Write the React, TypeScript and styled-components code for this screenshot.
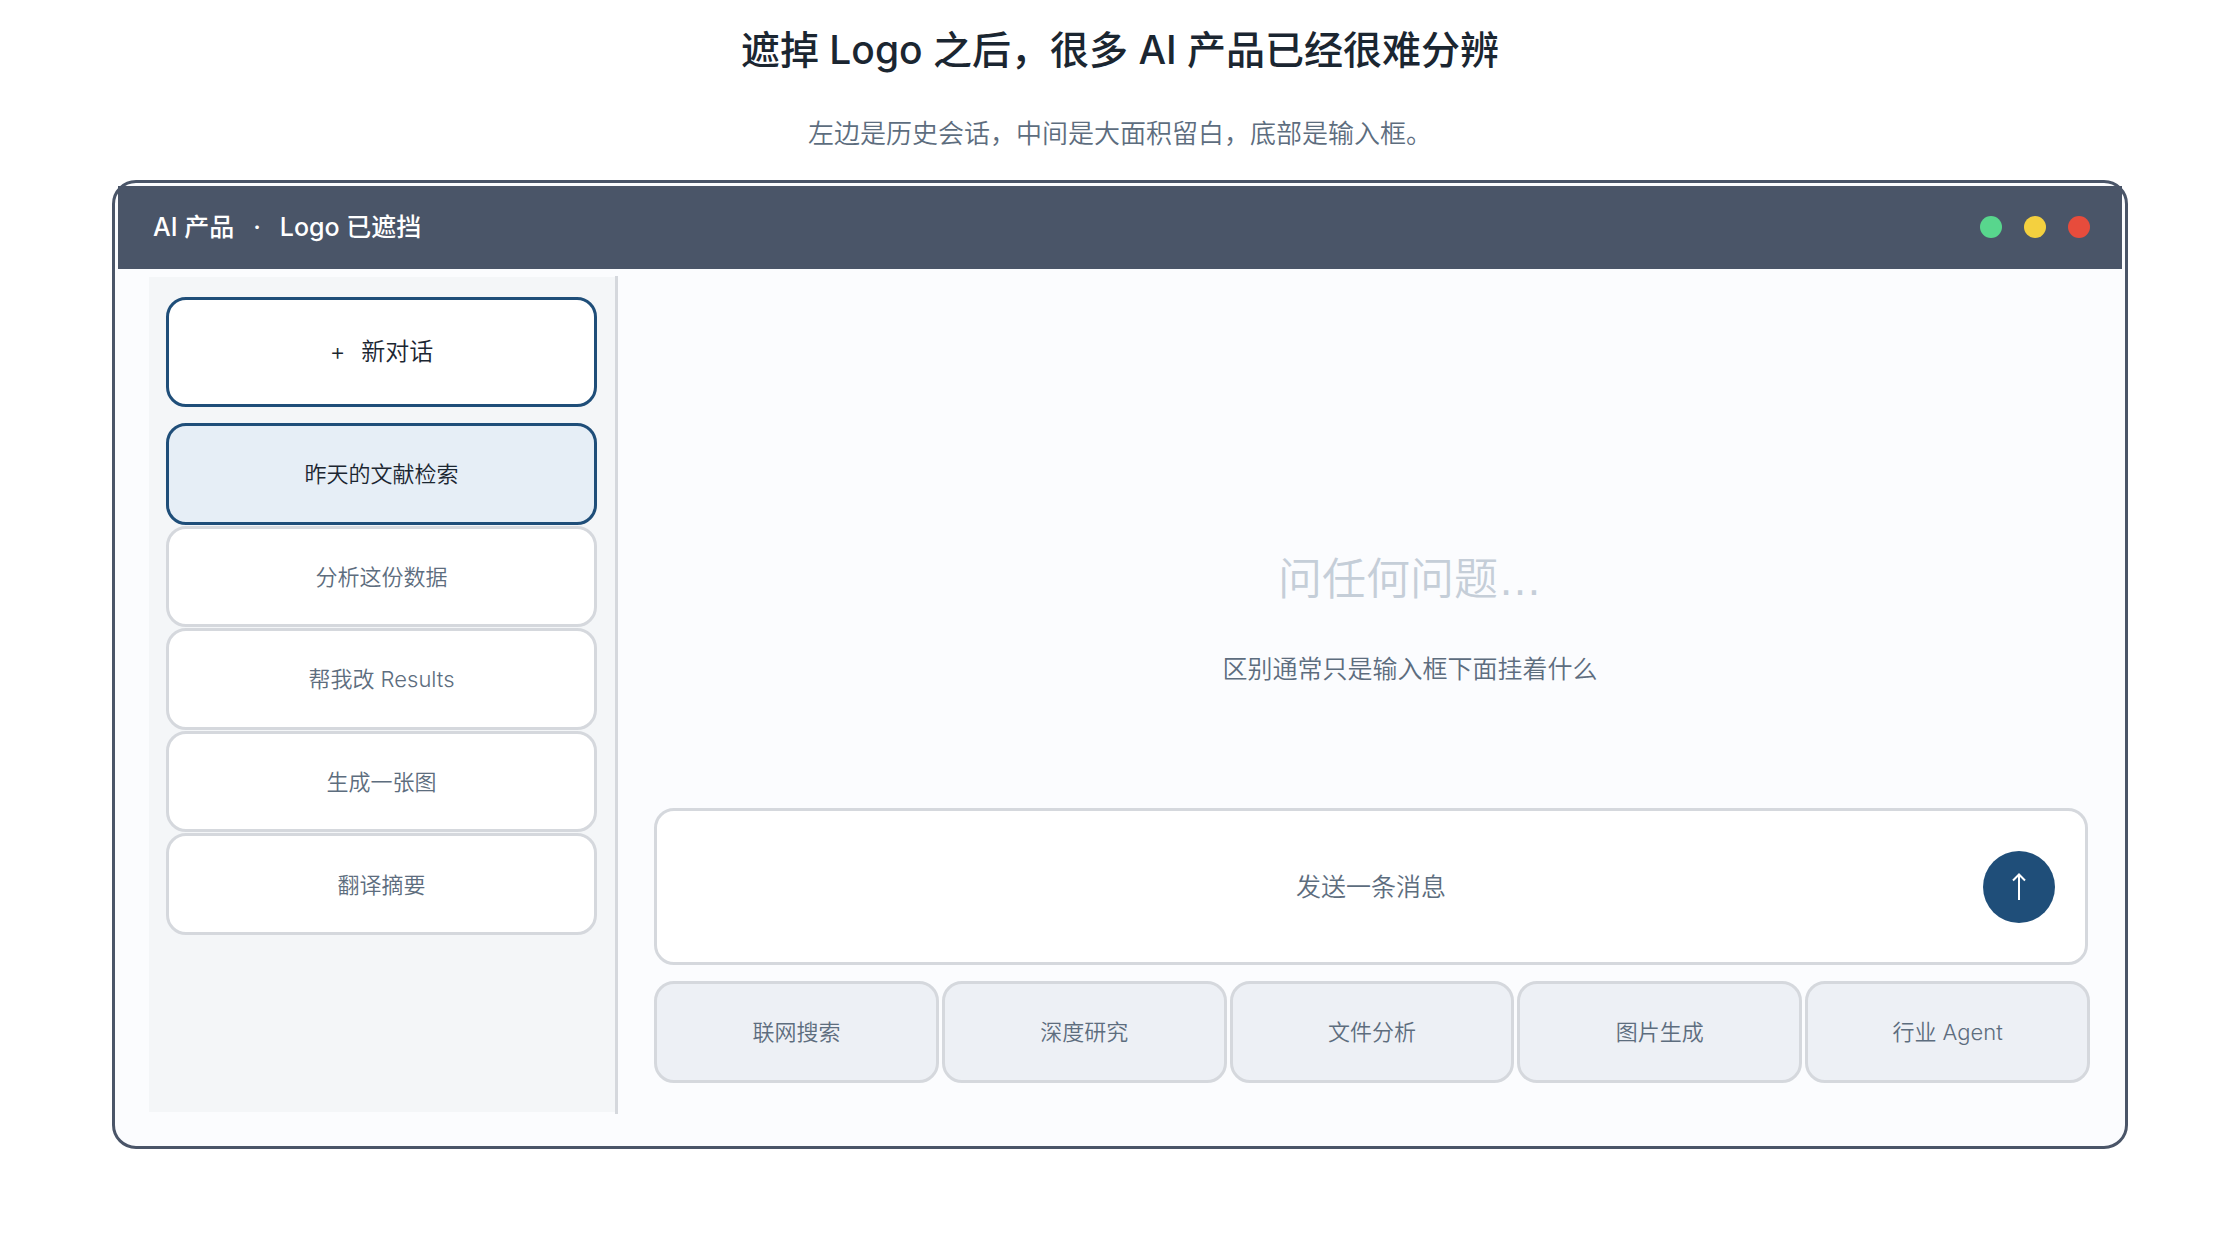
import React from "react";
import styled, { createGlobalStyle } from "styled-components";

const color = {
  ink: "#1b2631",
  slate: "#5d6d7e",
  frame: "#4a5568",
  navy: "#1f4e79",
  line: "#d5d8dd",
  ghost: "#c5ced8",
};

const GlobalStyle = createGlobalStyle`
  *, *::before, *::after { box-sizing: border-box; }
  body {
    margin: 0;
    background: #fff;
    color: ${color.ink};
    font-family: Inter, "Noto Sans CJK SC", sans-serif;
    font-weight: 350;
  }
  button, input { font: inherit; color: inherit; margin: 0; }
`;

const Page = styled.div`
  padding: 20px 112px 0;
`;

const Title = styled.h1`
  margin: 0;
  text-align: center;
  font-size: 39px;
  line-height: 60px;
  font-weight: 500;
`;

const Subtitle = styled.p`
  margin: 34px 0 26px;
  text-align: center;
  font-size: 26px;
  line-height: 40px;
  color: ${color.slate};
`;

const Window = styled.section`
  border: 3px solid ${color.frame};
  border-radius: 24px;
  background: #fbfcfe;
  padding: 3px 3px 32px;
`;

const TitleBar = styled.header`
  display: flex;
  align-items: center;
  justify-content: space-between;
  height: 83px;
  padding: 0 32px 1px 35px;
  background: ${color.frame};
  color: #fff;
`;

const Brand = styled.div`
  display: flex;
  gap: 19px;
  font-size: 25px;
  line-height: 36px;
  font-weight: 500;
`;

const Lights = styled.div`
  display: flex;
  gap: 22px;
`;

const Light = styled.span<{ $tone: string }>`
  width: 22px;
  height: 22px;
  border-radius: 50%;
  background: ${(p) => p.$tone};
`;

const Body = styled.div`
  display: grid;
  grid-template-columns: 469px 1fr;
  gap: 36px;
  padding: 7px 32px 0 31px;
`;

const Sidebar = styled.aside`
  padding: 1px 0 2px;
  border-right: 3px solid ${color.line};
`;

const SidebarFill = styled.div`
  display: flex;
  flex-direction: column;
  gap: 16px;
  height: 100%;
  padding: 20px 18px 20px 17px;
  background: #f4f6f8;
`;

const Tile = styled.button`
  display: flex;
  align-items: center;
  justify-content: center;
  padding: 0;
  border: 3px solid ${color.line};
  border-radius: 20px;
  background: #fff;
  color: ${color.slate};
  font-size: 22px;
  line-height: 32px;
`;

const NewChat = styled(Tile)`
  gap: 16px;
  height: 110px;
  border-color: ${color.navy};
  color: ${color.ink};
  font-size: 24px;
`;

const History = styled.nav`
  display: grid;
  grid-auto-rows: 1fr;
  gap: 1px;
  min-height: 512px;
`;

const HistoryItem = styled(Tile)<{ $active?: boolean }>`
  padding-top: 1px;
  ${(p) =>
    p.$active &&
    `border-color: ${color.navy}; background: #e6eef6; color: ${color.ink};`}
`;

const Main = styled.main`
  display: flex;
  flex-direction: column;
  padding-bottom: 31px;
`;

const Hero = styled.div`
  padding: 272px 0 119px 76px;
  text-align: center;
`;

const Prompt = styled.h2`
  margin: 0 0 37px;
  font-family: "Liberation Sans", "Noto Sans CJK SC", sans-serif;
  font-size: 44px;
  line-height: 64px;
  font-weight: 350;
  color: ${color.ghost};
`;

const Note = styled.p`
  margin: 0;
  font-size: 25px;
  line-height: 40px;
  color: ${color.slate};
`;

const Composer = styled.form`
  display: grid;
  grid-template-columns: 72px 1fr 72px;
  align-items: center;
  height: 157px;
  margin: 0 2px 16px 0;
  padding: 0 30px;
  border: 3px solid ${color.line};
  border-radius: 20px;
  background: #fff;
`;

const Message = styled.input`
  grid-column: 2;
  width: 100%;
  padding: 0;
  border: 0;
  outline: 0;
  background: transparent;
  text-align: center;
  font-size: 25px;
  line-height: 40px;
  &::placeholder { color: ${color.slate}; opacity: 1; }
`;

const Send = styled.button`
  display: grid;
  place-items: center;
  width: 72px;
  height: 72px;
  padding: 0;
  border: 0;
  border-radius: 50%;
  background: ${color.navy};
`;

const Tools = styled.div`
  display: grid;
  grid-template-columns: repeat(5, 1fr);
  gap: 3px;
`;

const Tool = styled(Tile)`
  height: 102px;
  background: #edf0f5;
`;

const history = ["昨天的文献检索", "分析这份数据", "帮我改 Results", "生成一张图", "翻译摘要"];
const tools = ["联网搜索", "深度研究", "文件分析", "图片生成", "行业 Agent"];
const lights = ["#58d68d", "#f4d03f", "#e74c3c"];

export default function App() {
  return (
    <>
      <GlobalStyle />
      <Page lang="zh-CN">
        <Title>遮掉 Logo 之后，很多 AI 产品已经很难分辨</Title>
        <Subtitle>左边是历史会话，中间是大面积留白，底部是输入框。</Subtitle>
        <Window>
          <TitleBar>
            <Brand>
              <span>AI 产品</span>
              <span>·</span>
              <span>Logo 已遮挡</span>
            </Brand>
            <Lights>
              {lights.map((tone) => (
                <Light key={tone} $tone={tone} />
              ))}
            </Lights>
          </TitleBar>
          <Body>
            <Sidebar>
              <SidebarFill>
                <NewChat type="button">
                  <span>+</span>
                  <span>新对话</span>
                </NewChat>
                <History>
                  {history.map((name, i) => (
                    <HistoryItem type="button" key={name} $active={i === 0}>
                      {name}
                    </HistoryItem>
                  ))}
                </History>
              </SidebarFill>
            </Sidebar>
            <Main>
              <Hero>
                <Prompt>问任何问题…</Prompt>
                <Note>区别通常只是输入框下面挂着什么</Note>
              </Hero>
              <Composer onSubmit={(e) => e.preventDefault()}>
                <Message type="text" aria-label="发送一条消息" placeholder="发送一条消息" />
                <Send type="submit" aria-label="发送">
                  <svg width="14" height="28" viewBox="0 0 14 28" fill="none" stroke="#fff" strokeWidth="2">
                    <path d="M7 27V2M1 7.5L7 1.5L13 7.5" />
                  </svg>
                </Send>
              </Composer>
              <Tools>
                {tools.map((name) => (
                  <Tool type="button" key={name}>
                    {name}
                  </Tool>
                ))}
              </Tools>
            </Main>
          </Body>
        </Window>
      </Page>
    </>
  );
}
